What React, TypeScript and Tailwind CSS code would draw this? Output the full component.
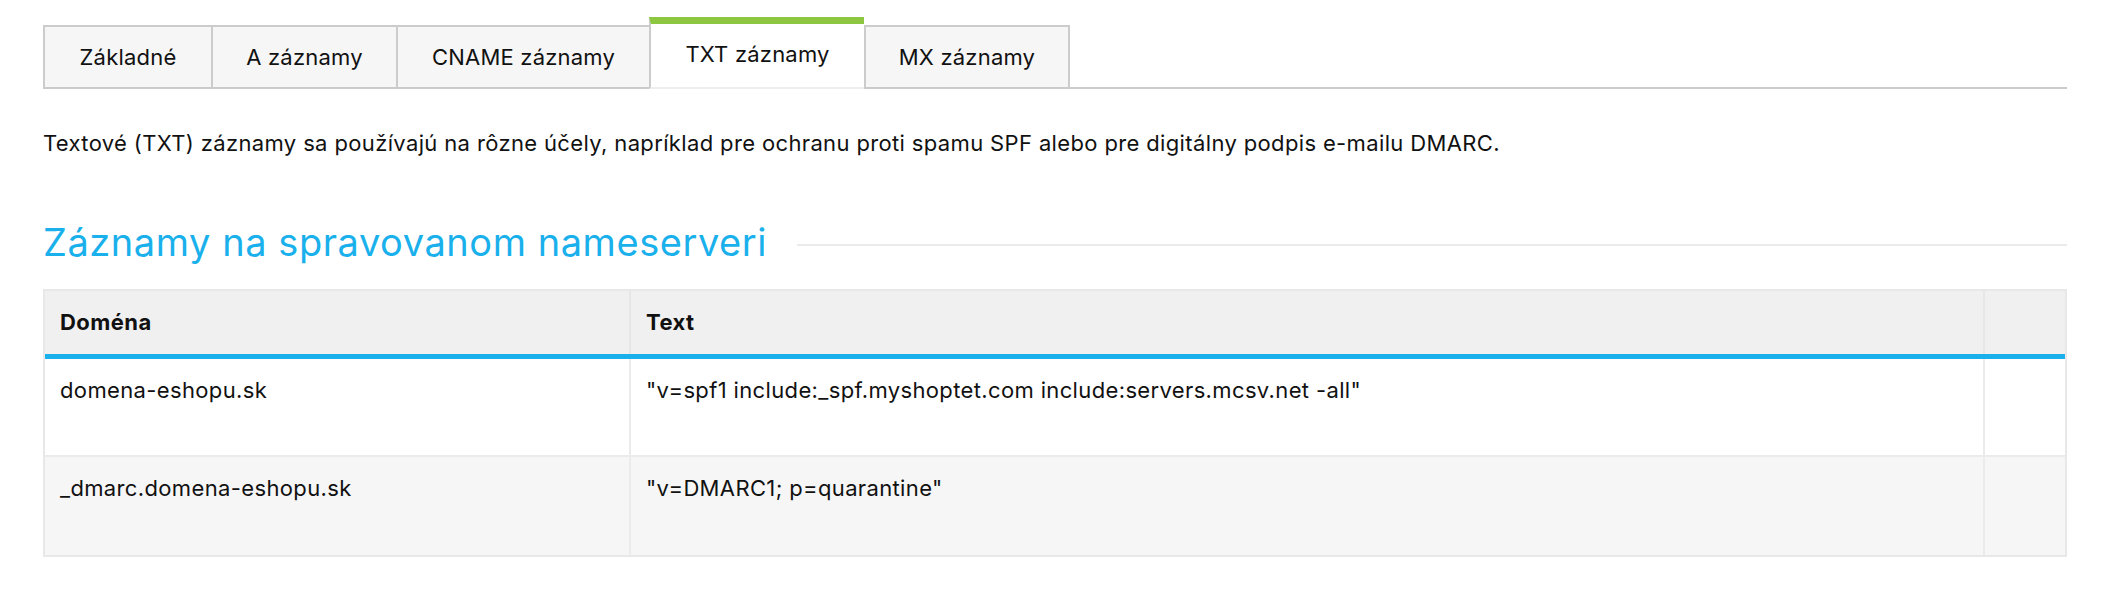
import React from "react";

const tabs = [
  { label: "Základné", w: "w-[168px]" },
  { label: "A záznamy", w: "w-[185px]" },
  { label: "CNAME záznamy", w: "w-[253px]" },
  { label: "TXT záznamy", w: "w-[215px]", active: true },
  { label: "MX záznamy", w: "w-[206px]", last: true },
];

const rows = [
  { d: "domena-eshopu.sk", t: '"v=spf1 include:_spf.myshoptet.com include:servers.mcsv.net -all"', bg: "bg-white" },
  { d: "_dmarc.domena-eshopu.sk", t: '"v=DMARC1; p=quarantine"', bg: "bg-[#f6f6f6]" },
];

export default function App() {
  return (
    <div
      className="min-h-[589px] bg-white px-[43px] pt-[17px] text-[#111] text-[22px] tracking-[0.36px]"
      style={{ fontFamily: "Inter, 'Noto Sans', sans-serif" }}
    >
      <div className="flex items-end border-b-2 border-[#cbcbcb] tracking-[0.2px]">
        {tabs.map((t) =>
          t.active ? (
            <div
              key={t.label}
              className={`${t.w} -mb-[2px] flex h-[72px] items-center justify-center border-t-[7px] border-l-2 border-b-2 border-t-[#8dc741] border-l-[#cccccc] border-b-[#eeeeee] bg-white pb-[2px]`}
            >
              {t.label}
            </div>
          ) : (
            <div
              key={t.label}
              className={`${t.w} flex h-[62px] items-center justify-center border-t-2 border-l-2 border-[#cccccc] bg-[#f6f6f6] ${t.last ? "border-r-2" : ""}`}
            >
              {t.label}
            </div>
          )
        )}
      </div>

      <p className="mt-[38px] leading-[32px]">
        Textové (TXT) záznamy sa používajú na rôzne účely, napríklad pre ochranu proti spamu SPF alebo pre digitálny podpis e-mailu DMARC.
      </p>

      <div className="mt-[61px] flex items-center">
        <h2 className="text-[38px] leading-[44px] font-normal tracking-[0.55px] text-[#1ab0ec]">
          Záznamy na spravovanom nameserveri
        </h2>
        <div className="ml-[30px] mt-[6px] h-[2px] flex-1 bg-[#ebebeb]" />
      </div>

      <div className="mt-[25px] border-2 border-[#e8e8e8]">
        <div className="flex h-[68px] border-b-[5px] border-[#1ab0ec] bg-[#f0f0f0] font-bold tracking-[0.45px]">
          <div className="flex w-[586px] items-center border-r-2 border-[#e6e6e6] pl-[15px]">Doména</div>
          <div className="flex w-[1354px] items-center border-r-2 border-[#e6e6e6] pl-[15px]">Text</div>
          <div className="flex-1" />
        </div>
        {rows.map((r, i) => (
          <div
            key={r.d}
            className={`flex h-[98px] ${r.bg} ${i === 0 ? "border-b-2 border-[#ebebeb]" : ""}`}
          >
            <div className="w-[586px] border-r-2 border-[#ebebeb] pl-[15px] pt-[15px] leading-[32px]">{r.d}</div>
            <div className="w-[1354px] border-r-2 border-[#ebebeb] pl-[15px] pt-[15px] leading-[32px]">{r.t}</div>
            <div className="flex-1" />
          </div>
        ))}
      </div>
    </div>
  );
}
